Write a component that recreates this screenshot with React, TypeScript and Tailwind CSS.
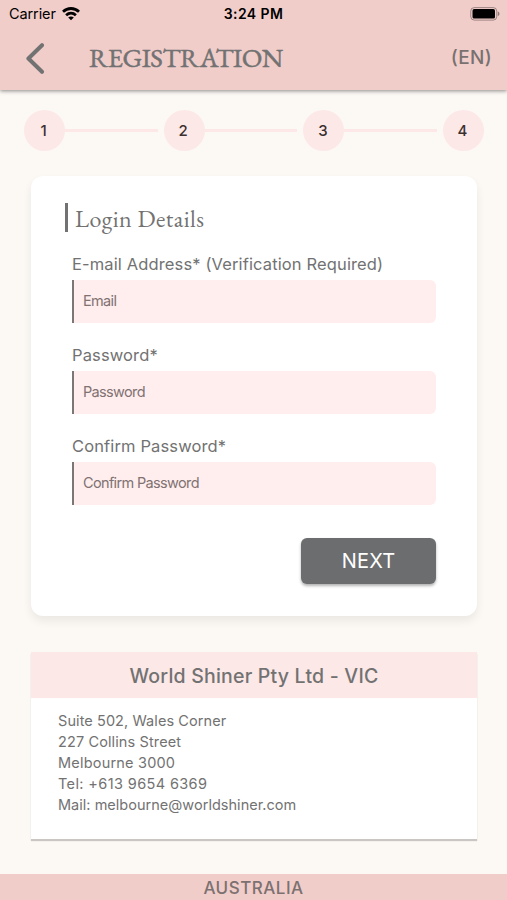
import { Fragment } from "react";

const STEPS = [1, 2, 3, 4];

const FIELDS = [
  { id: "email", type: "email", label: "E-mail Address* (Verification Required)", placeholder: "Email" },
  { id: "password", type: "password", label: "Password*", placeholder: "Password" },
  { id: "confirm", type: "password", label: "Confirm Password*", placeholder: "Confirm Password" },
];

const ADDRESS = [
  { text: "Suite 502, Wales Corner", className: "tracking-[0.08px]" },
  { text: "227 Collins Street", className: "tracking-[0.12px]" },
  { text: "Melbourne 3000", className: "tracking-[0.2px]" },
  { text: "Tel: +613 9654 6369", className: "tracking-[0.38px]" },
  { text: "Mail: melbourne@worldshiner.com", className: "tracking-[0.02px]" },
];

function WifiIcon() {
  return (
    <svg width="18" height="14" viewBox="0 0 18 14" fill="none" stroke="#000" strokeWidth="2.8" aria-hidden>
      <path d="M1 4.7C5.6 .4 12.4 .4 17 4.7" />
      <path d="M4.1 8.2c2.9-2.6 6.9-2.6 9.8 0" />
      <path d="M9 13.3 6.2 10.5c1.6-1.4 4-1.4 5.6 0z" fill="#000" stroke="none" />
    </svg>
  );
}

function BatteryIcon() {
  return (
    <svg width="31" height="14" viewBox="0 0 31 14" aria-hidden>
      <rect x="1.75" y=".6" width="26" height="12.5" rx="3.5" fill="none" stroke="#000" strokeOpacity=".35" />
      <rect x="3.5" y="2.1" width="22.5" height="9.4" rx="1.6" fill="#000" />
      <path d="M28.8 4.5c2.2.6 2.2 4 0 4.6z" fill="#000" fillOpacity=".4" />
    </svg>
  );
}

function Header() {
  return (
    <header className="h-[90px] shrink-0 bg-[#f1cdca] shadow-[0_1px_4px_rgba(0,0,0,0.45)]">
      <div className="grid h-[27px] grid-cols-3 items-center pr-[7px] pl-[9px] text-[14.5px] text-black">
        <div className="flex items-center gap-[6px]">
          <span className="tracking-[-0.1px]">Carrier</span>
          <WifiIcon />
        </div>
        <span className="-ml-[2px] text-center text-[14px] font-semibold tracking-[0.4px]">3:24 PM</span>
        <div className="flex justify-end">
          <BatteryIcon />
        </div>
      </div>
      <div className="flex h-[62px] items-center pr-[15px] pl-[25px]">
        <button aria-label="Back">
          <svg width="20" height="31" viewBox="0 0 20 31" fill="none" stroke="#727272" strokeWidth="4" strokeLinecap="round" strokeLinejoin="round" aria-hidden>
            <path d="M17 2.2 3.4 15.5 17 28.8" />
          </svg>
        </button>
        <h1 className="ml-[44px] font-['EB_Garamond','Liberation_Serif',serif] text-[27px] tracking-[-0.5px] [-webkit-text-stroke:0.5px_#727272]">
          REGISTRATION
        </h1>
        <span className="ml-auto text-[19px] font-medium tracking-[0.3px] text-[#777170]">(EN)</span>
      </div>
    </header>
  );
}

function Stepper() {
  return (
    <div className="mt-5 flex items-center pr-[23px] pl-[24px]">
      {STEPS.map((step, i) => (
        <Fragment key={step}>
          {i > 0 && <span className="mr-[6px] h-[3px] flex-1 bg-[#fde8e7]" />}
          <span className="grid size-[41px] place-items-center rounded-full bg-[#fce8e7] pt-[2px] pr-[2px] text-[15px] font-medium text-[#3b3030]">
            {step}
          </span>
        </Fragment>
      ))}
    </div>
  );
}

function LoginCard() {
  return (
    <form
      onSubmit={(e) => e.preventDefault()}
      className="mx-[31px] mt-[25px] h-[440px] w-[446px] rounded-xl bg-white px-[41px] pt-[27px] shadow-[0_5px_10px_rgba(0,0,0,0.07)]"
    >
      <h2 className="-ml-[7px] flex h-[29px] items-center border-l-[3px] border-[#727272] pt-[2px] pl-[7px] font-['EB_Garamond','Liberation_Serif',serif] text-[24px] tracking-[0.45px]">
        Login Details
      </h2>
      <div className="mt-[18px] flex flex-col gap-[18px]">
        {FIELDS.map((f) => (
          <div key={f.id}>
            <label htmlFor={f.id} className="block h-[30px] text-[16.5px] leading-[28px] tracking-[0.13px]">
              {f.label}
            </label>
            <input
              id={f.id}
              type={f.type}
              placeholder={f.placeholder}
              className="block h-[43px] w-[364px] rounded-r-md border-l-2 border-[#7b7776] bg-[#ffeeed] pb-[2px] pl-[9px] text-[14.5px] outline-none placeholder:tracking-[-0.65px] placeholder:text-[#7f7273]"
            />
          </div>
        ))}
      </div>
      <div className="mt-[33px] flex justify-end">
        <button className="h-[46px] w-[135px] rounded-md bg-[#6b6d6f] text-[20px] tracking-[0.2px] text-white shadow-[0_2px_3px_rgba(0,0,0,0.3)]">
          NEXT
        </button>
      </div>
    </form>
  );
}

function OfficeCard() {
  return (
    <section className="mx-[31px] mt-[36px] h-[187px] w-[446px] bg-white shadow-[0_2px_1px_rgba(0,0,0,0.2)]">
      <h3 className="grid h-[46px] place-items-center bg-[#fce8e7] pt-[3px] text-[19.5px] font-medium tracking-[0.21px]">
        World Shiner Pty Ltd - VIC
      </h3>
      <div className="pt-3 pl-[27px] text-[14.5px] leading-[21px]">
        {ADDRESS.map((line) => (
          <p key={line.text} className={line.className}>
            {line.text}
          </p>
        ))}
      </div>
    </section>
  );
}

export default function App() {
  return (
    <div className="flex h-[900px] w-[507px] flex-col overflow-hidden bg-[#fcf8f4] font-['Inter','Liberation_Sans',sans-serif] text-[#727272]">
      <Header />
      <main className="flex-1">
        <Stepper />
        <LoginCard />
        <OfficeCard />
      </main>
      <footer className="grid h-[26px] shrink-0 place-items-center bg-[#f1cdca] pt-[2px] text-[17px] leading-6 font-medium tracking-[0.5px] text-[#7b7170]">
        AUSTRALIA
      </footer>
    </div>
  );
}
